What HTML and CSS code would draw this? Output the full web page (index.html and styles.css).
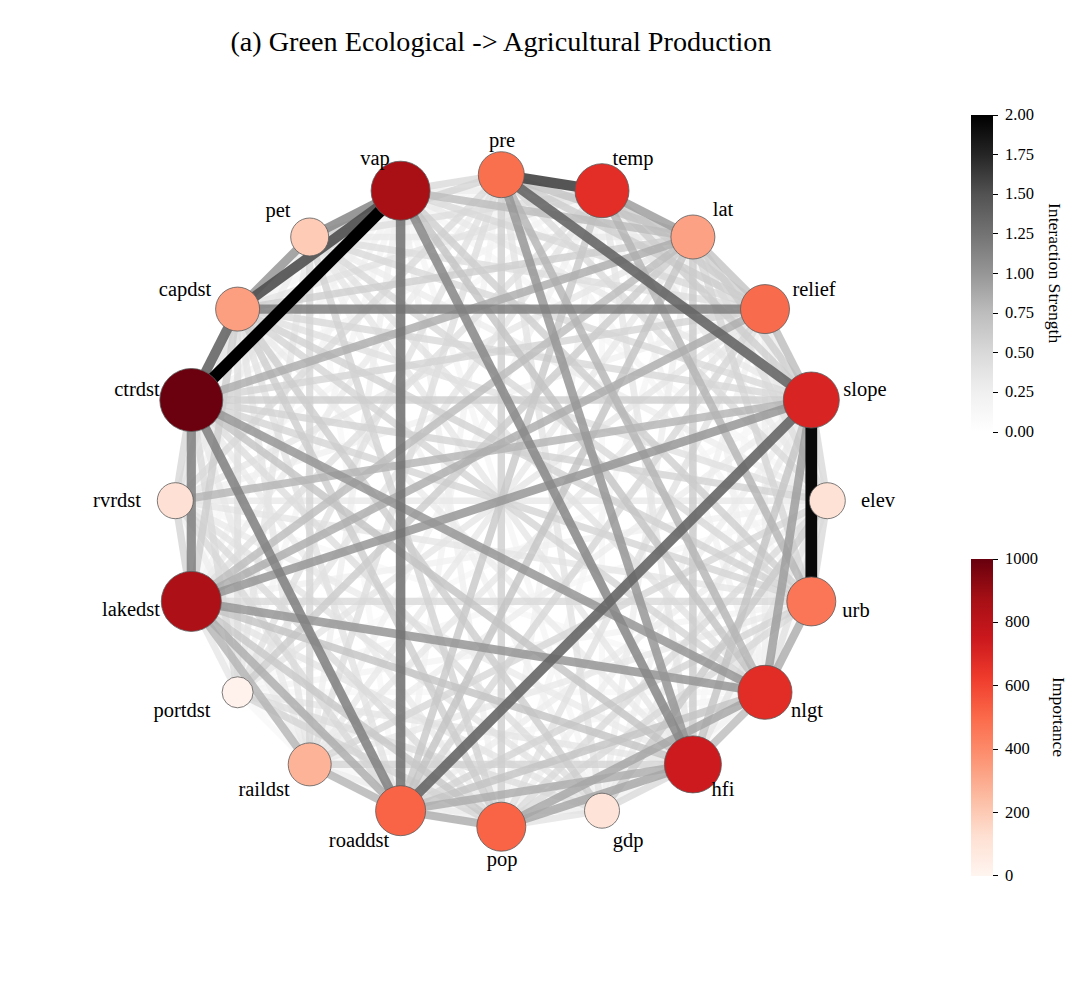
FILE: index.html
```html
<!DOCTYPE html>
<html>
<head>
<meta charset="utf-8">
<title>Green Ecological -> Agricultural Production</title>
<link rel="stylesheet" href="styles.css">
</head>
<body>
<div class="figure">
  <div class="plot">
    <h1 class="title">(a) Green Ecological -&gt; Agricultural Production</h1>
    <svg class="graph" id="graph" width="960" height="944" viewBox="0 59 960 944" xmlns="http://www.w3.org/2000/svg">
      <g id="edges"></g>
      <g id="nodes"></g>
      <g class="labels">
        <text class="lbl" x="502" y="147">pre</text>
        <text class="lbl" x="633" y="165">temp</text>
        <text class="lbl" x="723" y="216">lat</text>
        <text class="lbl" x="814" y="296">relief</text>
        <text class="lbl" x="865" y="396">slope</text>
        <text class="lbl" x="878" y="507">elev</text>
        <text class="lbl" x="856" y="617">urb</text>
        <text class="lbl" x="807" y="717">nlgt</text>
        <text class="lbl" x="723" y="796">hfi</text>
        <text class="lbl" x="628" y="847">gdp</text>
        <text class="lbl" x="502" y="866">pop</text>
        <text class="lbl" x="359" y="847">roaddst</text>
        <text class="lbl" x="264" y="796">raildst</text>
        <text class="lbl" x="182" y="717">portdst</text>
        <text class="lbl" x="131" y="616">lakedst</text>
        <text class="lbl" x="117" y="507">rvrdst</text>
        <text class="lbl" x="137" y="396">ctrdst</text>
        <text class="lbl" x="185" y="296">capdst</text>
        <text class="lbl" x="278" y="217">pet</text>
        <text class="lbl" x="375" y="165">vap</text>
      </g>
    </svg>
  </div>
  <div class="legends">
    <div class="cbar">
      <div class="bar bar-greys"></div>
      <div class="ticks">
        <span class="tick">2.00</span>
        <span class="tick">1.75</span>
        <span class="tick">1.50</span>
        <span class="tick">1.25</span>
        <span class="tick">1.00</span>
        <span class="tick">0.75</span>
        <span class="tick">0.50</span>
        <span class="tick">0.25</span>
        <span class="tick">0.00</span>
      </div>
      <div class="cbar-label">Interaction Strength</div>
    </div>
    <div class="cbar">
      <div class="bar bar-reds"></div>
      <div class="ticks">
        <span class="tick">1000</span>
        <span class="tick">800</span>
        <span class="tick">600</span>
        <span class="tick">400</span>
        <span class="tick">200</span>
        <span class="tick">0</span>
      </div>
      <div class="cbar-label">Importance</div>
    </div>
  </div>
</div>
<script src="script.js"></script>
</body>
</html>
```

FILE: styles.css
```css
body {
  margin: 0;
  background: #ffffff;
}

.figure {
  width: 1080px;
  height: 1003px;
  display: flex;
  overflow: hidden;
  font-family: "Liberation Serif", "Times New Roman", serif;
  color: #000000;
}

.plot {
  width: 960px;
  flex: none;
  display: flex;
  flex-direction: column;
}

.title {
  margin: 0;
  padding: 25px 0 0 42px;
  font-size: 28.2px;
  font-weight: normal;
  line-height: 34px;
  text-align: center;
  white-space: nowrap;
}

.graph {
  display: block;
  flex: none;
}

.lbl {
  font-family: "Liberation Serif", "Times New Roman", serif;
  font-size: 20.5px;
  fill: #000000;
  text-anchor: middle;
}

.legends {
  width: 120px;
  flex: none;
  box-sizing: border-box;
  display: flex;
  flex-direction: column;
  gap: 127px;
  padding: 115px 0 0 11px;
}

.cbar {
  display: flex;
  height: 317px;
}

.bar {
  width: 22px;
  flex: none;
}

.bar-greys {
  background: linear-gradient(to bottom,
    #000000 0%, #252525 12.5%, #525252 25%, #737373 37.5%, #969696 50%,
    #bdbdbd 62.5%, #d9d9d9 75%, #f0f0f0 87.5%, #ffffff 100%);
}

.bar-reds {
  background: linear-gradient(to bottom,
    #67000d 0%, #a50f15 12.5%, #cb181d 25%, #ef3b2c 37.5%, #fb6a4a 50%,
    #fc9272 62.5%, #fcbba1 75%, #fee0d2 87.5%, #fff5f0 100%);
}

.ticks {
  display: flex;
  flex-direction: column;
  justify-content: space-between;
  margin: -10px 0;
}

.tick {
  display: flex;
  align-items: center;
  height: 20px;
  font-size: 16.5px;
  line-height: 20px;
}

.tick::before {
  content: "";
  width: 5px;
  height: 1px;
  background: #000000;
  margin-right: 7px;
}

.cbar-label {
  writing-mode: vertical-rl;
  align-self: center;
  font-size: 17.6px;
  line-height: 20px;
  margin-left: 11px;
  white-space: nowrap;
}
```

FILE: script.js
```js
(function () {
  var NS = "http://www.w3.org/2000/svg";
  var names = ["pre","temp","lat","relief","slope","elev","urb","nlgt","hfi","gdp",
               "pop","roaddst","raildst","portdst","lakedst","rvrdst","ctrdst","capdst","pet","vap"];
  var radii = [23,27,22,24.5,28,18,24.5,27,28.5,17.5,24.5,25,21.5,15.5,30,18,31.5,22,19,29.5];
  var colors = ["#f9704f","#e22e27","#fca183","#f96b4d","#d82422","#fee2d5","#fb7656","#e12d26",
                "#cd1a1e","#fee4d8","#f96446","#f96446","#fcb398","#fff2ec","#ad1117","#fee1d4",
                "#6b010e","#fc9e80","#fdcbb6","#a81016"];
  var cx = 501.3, cy = 500.7, R = 326;
  var pos = names.map(function (n, i) {
    var a = (90 - 18 * i) * Math.PI / 180;
    return [cx + R * Math.cos(a), cy - R * Math.sin(a)];
  });

  var W = {
    "vap-ctrdst": 2.0, "slope-urb": 1.95, "pre-temp": 1.55, "vap-capdst": 1.5,
    "capdst-ctrdst": 1.35, "pre-slope": 1.35, "slope-roaddst": 1.35, "vap-roaddst": 1.25,
    "capdst-relief": 1.15, "ctrdst-lakedst": 1.15, "ctrdst-roaddst": 1.15, "vap-hfi": 1.1,
    "vap-pet": 1.1, "pet-capdst": 1.0, "pre-hfi": 1.0, "ctrdst-nlgt": 1.0,
    "lakedst-nlgt": 1.0, "lakedst-slope": 1.0, "temp-lat": 0.95, "slope-nlgt": 0.95,
    "pop-nlgt": 0.9, "pop-hfi": 0.9, "ctrdst-lat": 0.85, "lakedst-relief": 0.85,
    "lakedst-lat": 0.75, "rvrdst-slope": 0.8, "temp-urb": 0.8, "pre-nlgt": 0.8,
    "lakedst-roaddst": 0.85, "lakedst-raildst": 0.8, "raildst-roaddst": 0.8, "roaddst-pop": 0.85,
    "roaddst-hfi": 0.85, "roaddst-nlgt": 0.7, "urb-nlgt": 0.85, "nlgt-hfi": 0.75,
    "lat-relief": 0.7, "relief-slope": 0.75, "pre-pop": 0.6, "ctrdst-slope": 0.6,
    "vap-lat": 0.75, "vap-nlgt": 0.7, "vap-urb": 0.6, "vap-pre": 0.5,
    "lat-roaddst": 0.7, "temp-roaddst": 0.65, "lakedst-hfi": 0.7, "lakedst-pop": 0.65,
    "ctrdst-hfi": 0.7, "ctrdst-relief": 0.55, "capdst-lat": 0.6, "pet-slope": 0.5,
    "capdst-nlgt": 0.55, "ctrdst-urb": 0.55, "lakedst-urb": 0.5, "rvrdst-elev": 0.35,
    "slope-hfi": 0.7, "slope-elev": 0.5, "elev-urb": 0.5, "slope-lat": 0.6,
    "temp-slope": 0.6, "pre-lat": 0.7, "temp-relief": 0.6, "gdp-hfi": 0.5,
    "gdp-pop": 0.4, "roaddst-urb": 0.55, "pop-urb": 0.5, "capdst-lakedst": 0.6,
    "capdst-rvrdst": 0.4
  };

  function rnd(i, j) {
    var s = Math.sin(i * 127.1 + j * 311.7 + 17.3) * 43758.5453;
    return s - Math.floor(s);
  }

  var stops = [255, 240, 217, 189, 150, 115, 82, 37, 0];
  function greys(t) {
    t = Math.max(0, Math.min(1, t));
    var p = t * 8, k = Math.min(7, Math.floor(p)), f = p - k;
    return Math.round(stops[k] + (stops[k + 1] - stops[k]) * f);
  }

  var edges = [];
  for (var i = 0; i < names.length; i++) {
    for (var j = i + 1; j < names.length; j++) {
      var k1 = names[i] + "-" + names[j], k2 = names[j] + "-" + names[i];
      var w = W[k1] !== undefined ? W[k1] : W[k2];
      if (w === undefined) {
        w = 0.12 + 0.52 * Math.pow(rnd(i, j), 1.2);
      }
      edges.push([i, j, w]);
    }
  }
  edges.sort(function (a, b) { return a[2] - b[2]; });

  var gE = document.getElementById("edges");
  edges.forEach(function (e) {
    var a = pos[e[0]], b = pos[e[1]], w = e[2];
    var g = greys(w / 2);
    var line = document.createElementNS(NS, "line");
    line.setAttribute("x1", a[0].toFixed(1));
    line.setAttribute("y1", a[1].toFixed(1));
    line.setAttribute("x2", b[0].toFixed(1));
    line.setAttribute("y2", b[1].toFixed(1));
    line.setAttribute("stroke", "rgb(" + g + "," + g + "," + g + ")");
    line.setAttribute("stroke-opacity", (0.7 + 0.3 * w / 2).toFixed(3));
    line.setAttribute("stroke-width", (5.5 + 3.2 * w).toFixed(2));
    gE.appendChild(line);
  });

  var gN = document.getElementById("nodes");
  pos.forEach(function (p, i) {
    var c = document.createElementNS(NS, "circle");
    c.setAttribute("cx", p[0].toFixed(1));
    c.setAttribute("cy", p[1].toFixed(1));
    c.setAttribute("r", radii[i]);
    c.setAttribute("fill", colors[i]);
    c.setAttribute("stroke", "#5a5a5a");
    c.setAttribute("stroke-width", "0.8");
    gN.appendChild(c);
  });
})();
```
